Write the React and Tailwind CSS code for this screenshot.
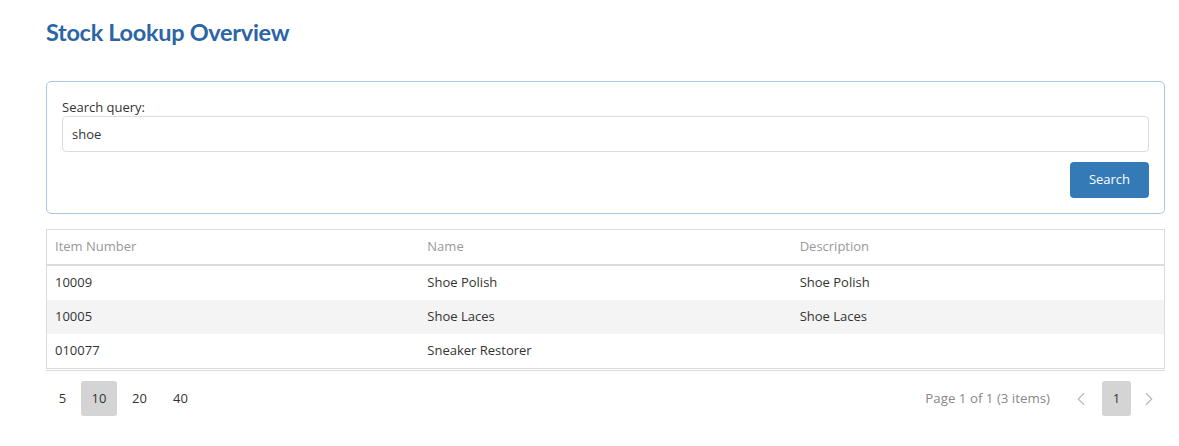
import { ChevronLeft, ChevronRight } from 'lucide-react'

const rows = [
  { num: '10009', name: 'Shoe Polish', desc: 'Shoe Polish' },
  { num: '10005', name: 'Shoe Laces', desc: 'Shoe Laces' },
  { num: '010077', name: 'Sneaker Restorer', desc: '' },
]

export default function App(){
  return (
    <div className="min-h-[446px] bg-white pl-[46px] pr-[14px] pt-[17px] text-[13px] text-[#333]" style={{ fontFamily: '"Open Sans", "Noto Sans", sans-serif' }}>
      <h1 className="text-[23.5px] font-bold text-[#2b65a6] tracking-[-0.3px] h-[30px] leading-[30px]" style={{ fontFamily: 'Lato, "Noto Sans", sans-serif' }}>Stock Lookup Overview</h1>

      <section className="mt-[34px] border border-[#a9c8e4] rounded-[5px] px-[15px] pt-[16px] pb-[15px]">
        <label className="block leading-[18px] text-[13px] text-[#333]">Search query:</label>
        <input defaultValue="shoe" className="mt-0 w-full h-[36px] border border-[#dcdcdc] rounded-[4px] px-[9px] text-[13px] text-[#333] outline-none" />
        <div className="flex justify-end mt-[10px]">
          <button className="h-[36px] w-[79px] bg-[#337ab7] text-white rounded-[4px] text-[13px]">Search</button>
        </div>
      </section>

      <div className="mt-[15px] border border-[#dcdcdc]">
        <div className="grid grid-cols-3 h-[36px] items-center border-b-2 border-[#dcdcdc] text-[#999]">
          <div className="px-[8px]">Item Number</div>
          <div className="px-[8px]">Name</div>
          <div className="px-[8px]">Description</div>
        </div>
        {rows.map((r, i) => (
          <div key={r.num} className={`grid grid-cols-3 h-[34px] items-center ${i === 1 ? 'bg-[#f4f4f4]' : 'bg-white'}`}>
            <div className="px-[8px]">{r.num}</div>
            <div className="px-[8px]">{r.name}</div>
            <div className="px-[8px]">{r.desc}</div>
          </div>
        ))}
      </div>
      <div className="border-t border-[#dcdcdc] mt-[1px]"></div>

      <div className="flex items-center justify-between mt-[10px]">
        <div className="flex items-center">
          <span className="w-[33px] h-[35px] flex items-center justify-center">5</span>
          <span className="ml-[2px] w-[36px] h-[35px] flex items-center justify-center bg-[#d4d4d4] rounded-[3px]">10</span>
          <span className="ml-[2px] w-[41px] h-[35px] flex items-center justify-center">20</span>
          <span className="w-[41px] h-[35px] flex items-center justify-center">40</span>
        </div>
        <div className="flex items-center pr-[5px]">
          <span className="text-[#888] mr-[20px] text-[13.3px]">Page 1 of 1 (3 items)</span>
          <ChevronLeft className="w-[22px] h-[22px] text-[#bbb]" strokeWidth={1.3} />
          <span className="ml-[10px] w-[29px] h-[35px] flex items-center justify-center bg-[#d4d4d4] rounded-[3px] text-[#333]">1</span>
          <ChevronRight className="ml-[7px] w-[22px] h-[22px] text-[#bbb]" strokeWidth={1.3} />
        </div>
      </div>
    </div>
  )
}
